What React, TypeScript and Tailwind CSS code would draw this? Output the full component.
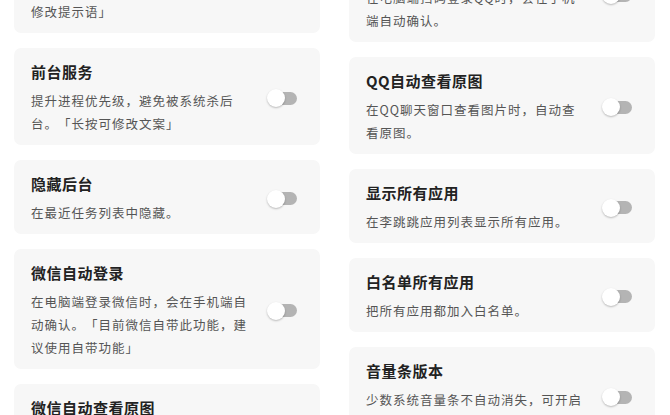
const font = { fontFamily: '"Noto Sans CJK SC", "Noto Sans", sans-serif' }

interface Item {
  title: string
  desc: string
}

const leftItems: Item[] = [
  { title: '通知栏保活', desc: '在通知栏显示常驻通知，提升进程的存活率，防止被系统杀死。「长按可修改提示语」' },
  { title: '前台服务', desc: '提升进程优先级，避免被系统杀后台。「长按可修改文案」' },
  { title: '隐藏后台', desc: '在最近任务列表中隐藏。' },
  { title: '微信自动登录', desc: '在电脑端登录微信时，会在手机端自动确认。「目前微信自带此功能，建议使用自带功能」' },
  { title: '微信自动查看原图', desc: '在微信聊天窗口查看图片时，自动查看原图。' },
]

const rightItems: Item[] = [
  { title: 'QQ自动登录', desc: '在电脑端扫码登录QQ时，会在手机端自动确认。' },
  { title: 'QQ自动查看原图', desc: '在QQ聊天窗口查看图片时，自动查看原图。' },
  { title: '显示所有应用', desc: '在李跳跳应用列表显示所有应用。' },
  { title: '白名单所有应用', desc: '把所有应用都加入白名单。' },
  { title: '音量条版本', desc: '少数系统音量条不自动消失，可开启此选项。' },
]

function Toggle() {
  return (
    <div className="relative w-[30px] h-[18px] shrink-0">
      <div className="absolute right-0 top-[2.5px] w-[22px] h-[13px] rounded-full bg-[#b4b4b4]" />
      <div className="absolute left-0 top-0 w-[18px] h-[18px] rounded-full bg-white shadow-[0_1px_2px_rgba(0,0,0,0.25)]" />
    </div>
  )
}

function Card({ item }: { item: Item }) {
  return (
    <div className="flex items-center justify-between rounded-[7px] bg-[#f7f7f7] pl-[17px] pr-[23px] pt-[13px] pb-[10px]">
      <div className="w-[222px] [text-spacing-trim:space-all]">
        <div className="text-[15px] leading-[22px] font-semibold tracking-[0.5px] text-[#222]">{item.title}</div>
        <div className="mt-[6px] text-[12.5px] leading-[23px] tracking-[1px] text-[#555]">{item.desc}</div>
      </div>
      <Toggle />
    </div>
  )
}

export default function App() {
  return (
    <div className="w-[670px] h-[415px] overflow-hidden bg-white" style={font}>
      <div className="grid grid-cols-2 gap-x-[29px] px-[14px] pr-[15px] items-start">
        <div className="flex flex-col gap-[15px] -mt-[87px]">
          {leftItems.map((item) => (
            <Card key={item.title} item={item} />
          ))}
        </div>
        <div className="flex flex-col gap-[15px] -mt-[55px]">
          {rightItems.map((item) => (
            <Card key={item.title} item={item} />
          ))}
        </div>
      </div>
    </div>
  )
}
